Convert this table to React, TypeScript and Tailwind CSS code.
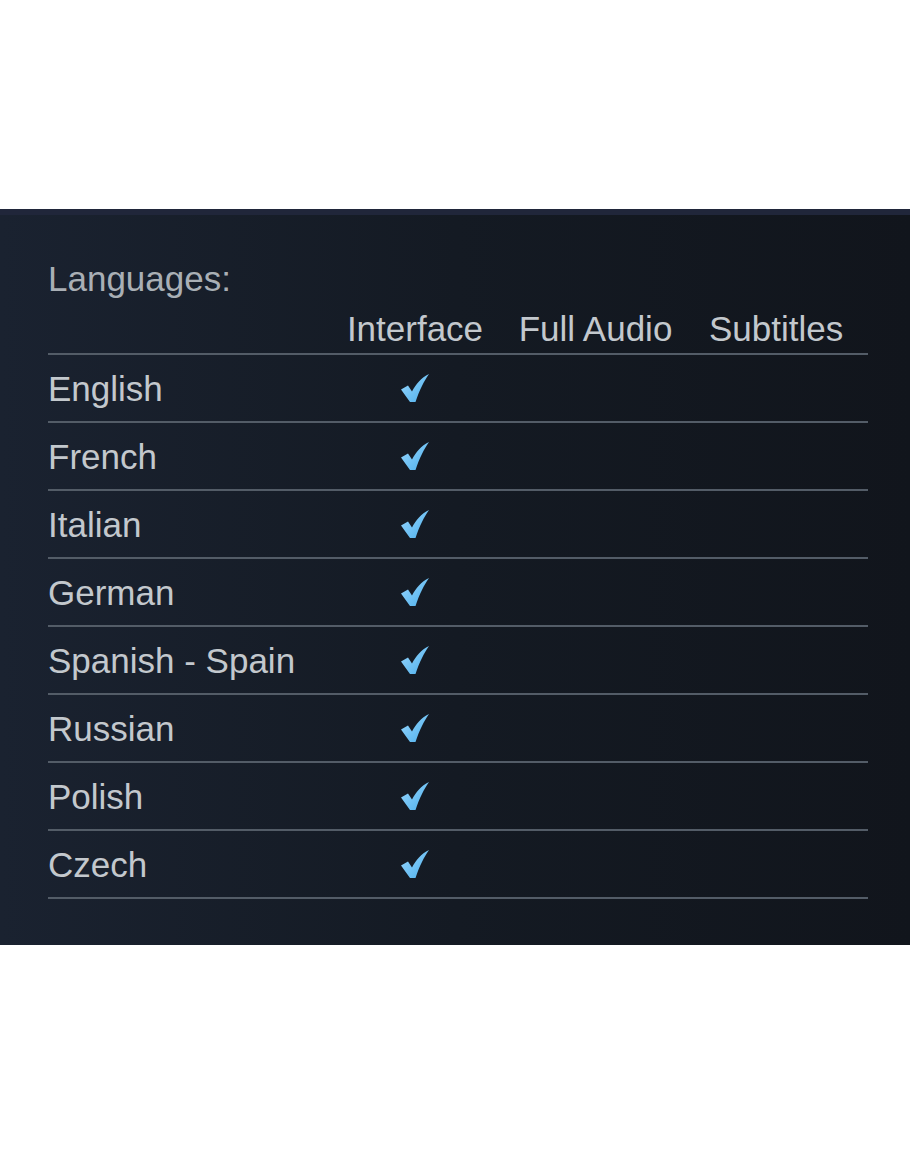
const languages = ['English', 'French', 'Italian', 'German', 'Spanish - Spain', 'Russian', 'Polish', 'Czech'];

function Check() {
  return (
    <svg width="30" height="30" viewBox="0 0 30 30" className="block">
      <defs>
        <linearGradient id="chk" x1="0" y1="0" x2="1" y2="1">
          <stop offset="0%" stopColor="#9bd8ff" />
          <stop offset="100%" stopColor="#4aaeea" />
        </linearGradient>
      </defs>
      <path
        d="M1 16.5 L8 12.5 L12 18.5 C16 11 21 5 29 1 C24 8 19.5 17 15.5 29 L10 29 Z"
        fill="url(#chk)"
      />
    </svg>
  );
}

export default function App() {
  return (
    <div className="min-h-[1155px] bg-white pt-[209px]" style={{ fontFamily: '"Liberation Sans", Arial, sans-serif' }}>
      <div className="border-t-[6px] border-[#20263a] bg-gradient-to-r from-[#1a2230] via-[#141a23] to-[#11151c] pl-12 pr-[42px] pt-[44px] pb-[46px]">
        <div className="text-[35px] leading-[39px] text-[#a9afb5]">Languages:</div>
        <div className="mt-[11px] flex pb-[5px] text-[35px] leading-[39px] text-[#c3c8cd]">
          <div className="w-[298px]" />
          <div className="w-[138px] text-center">Interface</div>
          <div className="ml-[34px] w-[155px] text-center">Full Audio</div>
          <div className="ml-[36px] w-[134px] text-center">Subtitles</div>
        </div>
        {languages.map((lang) => (
          <div key={lang} className="flex h-[68px] items-center border-t-2 border-[#535c67] text-[35px] leading-[39px] text-[#c3c8cd]">
            <div className="w-[298px]">{lang}</div>
            <div className="flex w-[138px] justify-center">
              <Check />
            </div>
            <div className="ml-[34px] w-[155px]" />
            <div className="ml-[36px] w-[134px]" />
          </div>
        ))}
        <div className="border-t-2 border-[#535c67]" />
      </div>
    </div>
  );
}
